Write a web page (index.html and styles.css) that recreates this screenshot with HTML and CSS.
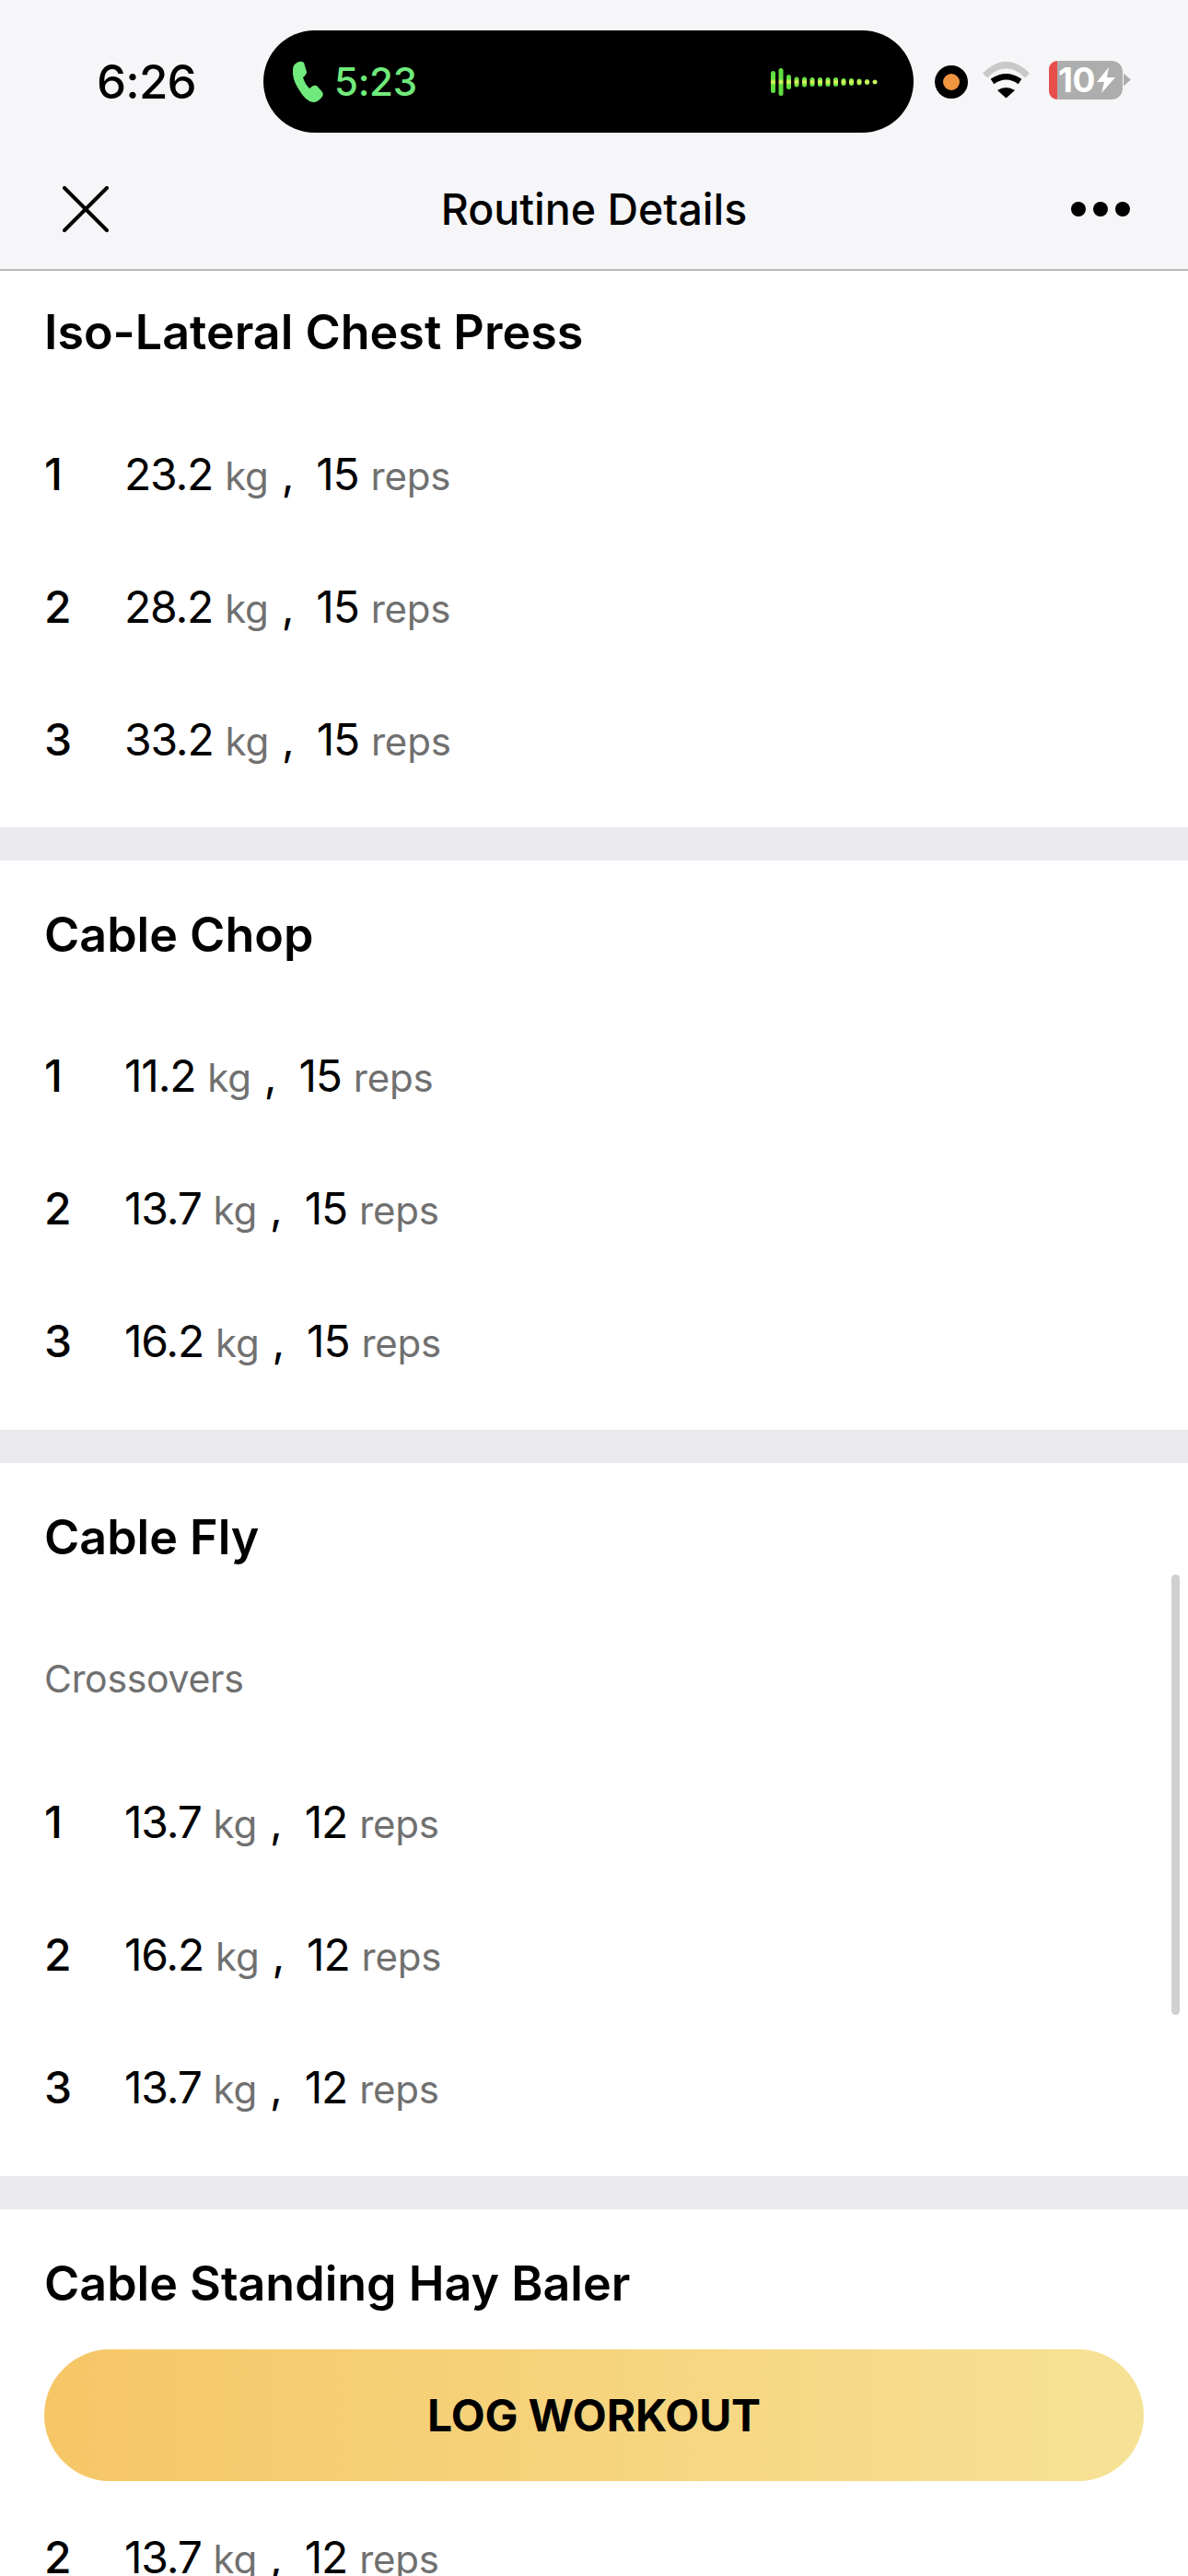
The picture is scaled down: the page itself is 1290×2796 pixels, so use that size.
FILE: index.html
```html
<!DOCTYPE html>
<html lang="en">
<head>
<meta charset="utf-8">
<title>Routine Details</title>
<link rel="stylesheet" href="styles.css">
</head>
<body>
<div class="screen">
  <header class="top">
    <div class="status">
      <span class="clock">6:26</span>
      <div class="island">
        <svg class="phone" width="33" height="45" viewBox="0 0 33 45"><path fill="#70ea7c" d="M3 3Q8-1 12 2L15 12Q15 15 11 18Q13 25 18 30L22 27Q25 26 27 28L32 34Q34 37 31 40Q27 45 22 45Q14 44 7 32Q-1 20 0 10Q0 5 3 3Z"/></svg>
        <span class="call-time">5:23</span>
        <svg class="wave" width="118" height="32" viewBox="0 0 118 32">
          <defs><linearGradient id="wv" gradientUnits="userSpaceOnUse" x1="0" y1="1" x2="0" y2="31"><stop offset="0" stop-color="#5fdc3f"/><stop offset="0.38" stop-color="#62e040"/><stop offset="0.5" stop-color="#e8f760"/><stop offset="0.62" stop-color="#62e040"/><stop offset="1" stop-color="#5fdc3f"/></linearGradient></defs>
          <g fill="url(#wv)">
            <rect x="0" y="4" width="5" height="24" rx="2.5"/><rect x="8.5" y="1" width="5" height="30" rx="2.5"/><rect x="17" y="8" width="5" height="16" rx="2.5"/><rect x="25.5" y="10.5" width="5" height="11" rx="2.5"/><rect x="34" y="10.5" width="5" height="11" rx="2.5"/><rect x="42.5" y="11" width="5" height="10" rx="2.5"/><rect x="51" y="11" width="5" height="10" rx="2.5"/><rect x="59.5" y="11" width="5" height="10" rx="2.5"/><rect x="68" y="11" width="5" height="10" rx="2.5"/><rect x="76.5" y="12" width="5" height="8" rx="2.5"/><rect x="85" y="12" width="5" height="8" rx="2.5"/><rect x="93.5" y="12.5" width="5" height="7" rx="2.5"/><rect x="102" y="13" width="5" height="6" rx="2.5"/><rect x="110.5" y="13.5" width="5" height="5" rx="2.5"/>
          </g>
        </svg>
      </div>
      <span class="mic-dot"></span>
      <svg class="wifi" width="53" height="40" viewBox="0 0 53 40">
        <path d="M3.5 15Q26.5-8 49.5 15" fill="none" stroke="#c9c9c9" stroke-width="7"/>
        <path d="M11.5 21.5Q26.5 11 41.5 21.5" fill="none" stroke="#000" stroke-width="6.5"/>
        <path d="M17 31Q26.5 25 36 31L26.5 39.5Z" fill="#000"/>
      </svg>
      <div class="battery-wrap">
        <div class="battery">
          <span class="battery-low"></span>
          <span class="battery-num">10</span>
          <svg class="bolt" width="20" height="28" viewBox="0 0 20 28"><path fill="#fff" d="M13 0L0 16H8L5 28L20 11H11Z"/></svg>
        </div>
        <span class="battery-nub"></span>
      </div>
    </div>
    <nav class="nav">
      <svg class="close" width="50" height="50" viewBox="0 0 50 50"><path d="M2 2L48 48M48 2L2 48" stroke="#000" stroke-width="4" stroke-linecap="round"/></svg>
      <h1 class="nav-title">Routine Details</h1>
      <div class="more"><span></span><span></span><span></span></div>
    </nav>
  </header>

  <main>
    <section class="exercise exercise-scrolled">
      <h2 class="name">Iso-Lateral Chest Press</h2>
      <div class="set"><span class="idx">1</span><span class="val">23.2</span><span class="unit">kg</span><span class="sep">,</span><span class="val">15</span><span class="unit">reps</span></div>
      <div class="set"><span class="idx">2</span><span class="val">28.2</span><span class="unit">kg</span><span class="sep">,</span><span class="val">15</span><span class="unit">reps</span></div>
      <div class="set"><span class="idx">3</span><span class="val">33.2</span><span class="unit">kg</span><span class="sep">,</span><span class="val">15</span><span class="unit">reps</span></div>
    </section>
    <section class="exercise">
      <h2 class="name">Cable Chop</h2>
      <div class="set"><span class="idx">1</span><span class="val">11.2</span><span class="unit">kg</span><span class="sep">,</span><span class="val">15</span><span class="unit">reps</span></div>
      <div class="set"><span class="idx">2</span><span class="val">13.7</span><span class="unit">kg</span><span class="sep">,</span><span class="val">15</span><span class="unit">reps</span></div>
      <div class="set"><span class="idx">3</span><span class="val">16.2</span><span class="unit">kg</span><span class="sep">,</span><span class="val">15</span><span class="unit">reps</span></div>
    </section>
    <section class="exercise">
      <h2 class="name">Cable Fly</h2>
      <p class="note">Crossovers</p>
      <div class="set"><span class="idx">1</span><span class="val">13.7</span><span class="unit">kg</span><span class="sep">,</span><span class="val">12</span><span class="unit">reps</span></div>
      <div class="set"><span class="idx">2</span><span class="val">16.2</span><span class="unit">kg</span><span class="sep">,</span><span class="val">12</span><span class="unit">reps</span></div>
      <div class="set"><span class="idx">3</span><span class="val">13.7</span><span class="unit">kg</span><span class="sep">,</span><span class="val">12</span><span class="unit">reps</span></div>
    </section>
    <section class="exercise">
      <h2 class="name">Cable Standing Hay Baler</h2>
      <div class="set"><span class="idx">1</span><span class="val">11.2</span><span class="unit">kg</span><span class="sep">,</span><span class="val">12</span><span class="unit">reps</span></div>
      <div class="set"><span class="idx">2</span><span class="val">13.7</span><span class="unit">kg</span><span class="sep">,</span><span class="val">12</span><span class="unit">reps</span></div>
    </section>
  </main>

  <div class="scrollbar"></div>
  <button class="log">LOG WORKOUT</button>
</div>
</body>
</html>
```
FILE: styles.css
```css
* { box-sizing: border-box; }
html, body { margin: 0; padding: 0; background: #fff; }
body { font-family: Inter, "Liberation Sans", sans-serif; color: #000; }
.screen { position: relative; width: 1290px; height: 2796px; overflow: hidden; background: #fff; }

.top { background: #f6f6f9; border-bottom: 2px solid #b8b8b8; height: 294px; }
.status { display: flex; align-items: center; height: 144px; padding-top: 33px; padding-left: 105px; }
.clock { width: 107px; font-size: 51px; font-weight: 500; line-height: 111px; letter-spacing: -0.8px; white-space: nowrap; }
.island { display: flex; align-items: center; width: 706px; height: 111px; margin-left: 74px; padding-left: 32px; background: #000; border-radius: 56px; }
.phone { flex: none; }
.call-time { margin-left: 12px; width: 85px; font-size: 42px; font-weight: 500; color: #70ea7c; letter-spacing: -0.3px; white-space: nowrap; }
.wave { flex: none; margin-left: 389px; }
.mic-dot { flex: none; width: 36px; height: 36px; margin-left: 23px; border-radius: 50%; background: #f09440; border: 9px solid #000; }
.wifi { flex: none; margin-left: 15px; margin-top: -4px; }
.battery-wrap { display: flex; align-items: center; margin-left: 20px; margin-top: -4px; }
.battery { position: relative; display: flex; align-items: center; width: 80px; height: 42px; padding-left: 10px; background: #adadad; border-radius: 12px; }
.battery-low { position: absolute; left: 0; top: 0; bottom: 0; width: 9px; background: #e84f4a; border-radius: 12px 0 0 12px; }
.battery-num { position: relative; font-size: 37px; font-weight: 700; color: #fff; line-height: 42px; letter-spacing: -0.5px; }
.bolt { margin-left: 2px; flex: none; }
.battery-nub { width: 8px; height: 14px; margin-left: 1px; background: #adadad; clip-path: polygon(0 0, 100% 50%, 0 100%); }

.nav { display: grid; grid-template-columns: 1fr auto 1fr; align-items: center; height: 148px; padding: 18px 68px 0; }
.close { display: block; }
.nav-title { margin: 0; font-size: 46.5px; font-weight: 500; white-space: nowrap; }
.more { display: flex; justify-content: flex-end; gap: 8px; margin-right: -5px; }
.more span { width: 16px; height: 16px; border-radius: 50%; background: #000; }

.exercise { padding-bottom: 24px; border-bottom: 36px solid #e9e9ee; }
.name { margin: 0; padding-top: 46px; height: 162px; font-size: 52px; font-weight: 600; line-height: 70px; padding-left: 48px; white-space: nowrap; }
.exercise-scrolled { padding-bottom: 23px; }
.exercise-scrolled .name { padding-top: 32px; height: 149px; }
.note { margin: 0; height: 156px; padding-left: 48px; font-size: 41px; line-height: 144px; color: #707070; letter-spacing: -0.3px; }
.set { display: flex; align-items: baseline; height: 144px; line-height: 144px; padding-left: 48px; font-size: 48px; letter-spacing: -1.2px; white-space: nowrap; }
.idx { width: 87px; font-weight: 500; }
.unit { margin-left: 13px; font-size: 42px; color: #707070; letter-spacing: -0.2px; }
.sep { margin-left: 14px; margin-right: 25px; }

.scrollbar { position: absolute; right: 9px; top: 1709px; width: 9px; height: 478px; border-radius: 5px; background: #d0d0d0; }
.log { position: absolute; left: 48px; top: 2550px; width: 1194px; height: 143px; border: 0; border-radius: 72px; font-family: inherit; font-size: 48px; font-weight: 700; color: #000; letter-spacing: -0.2px; background: linear-gradient(90deg, #f6c666, #f6e296); }
```
